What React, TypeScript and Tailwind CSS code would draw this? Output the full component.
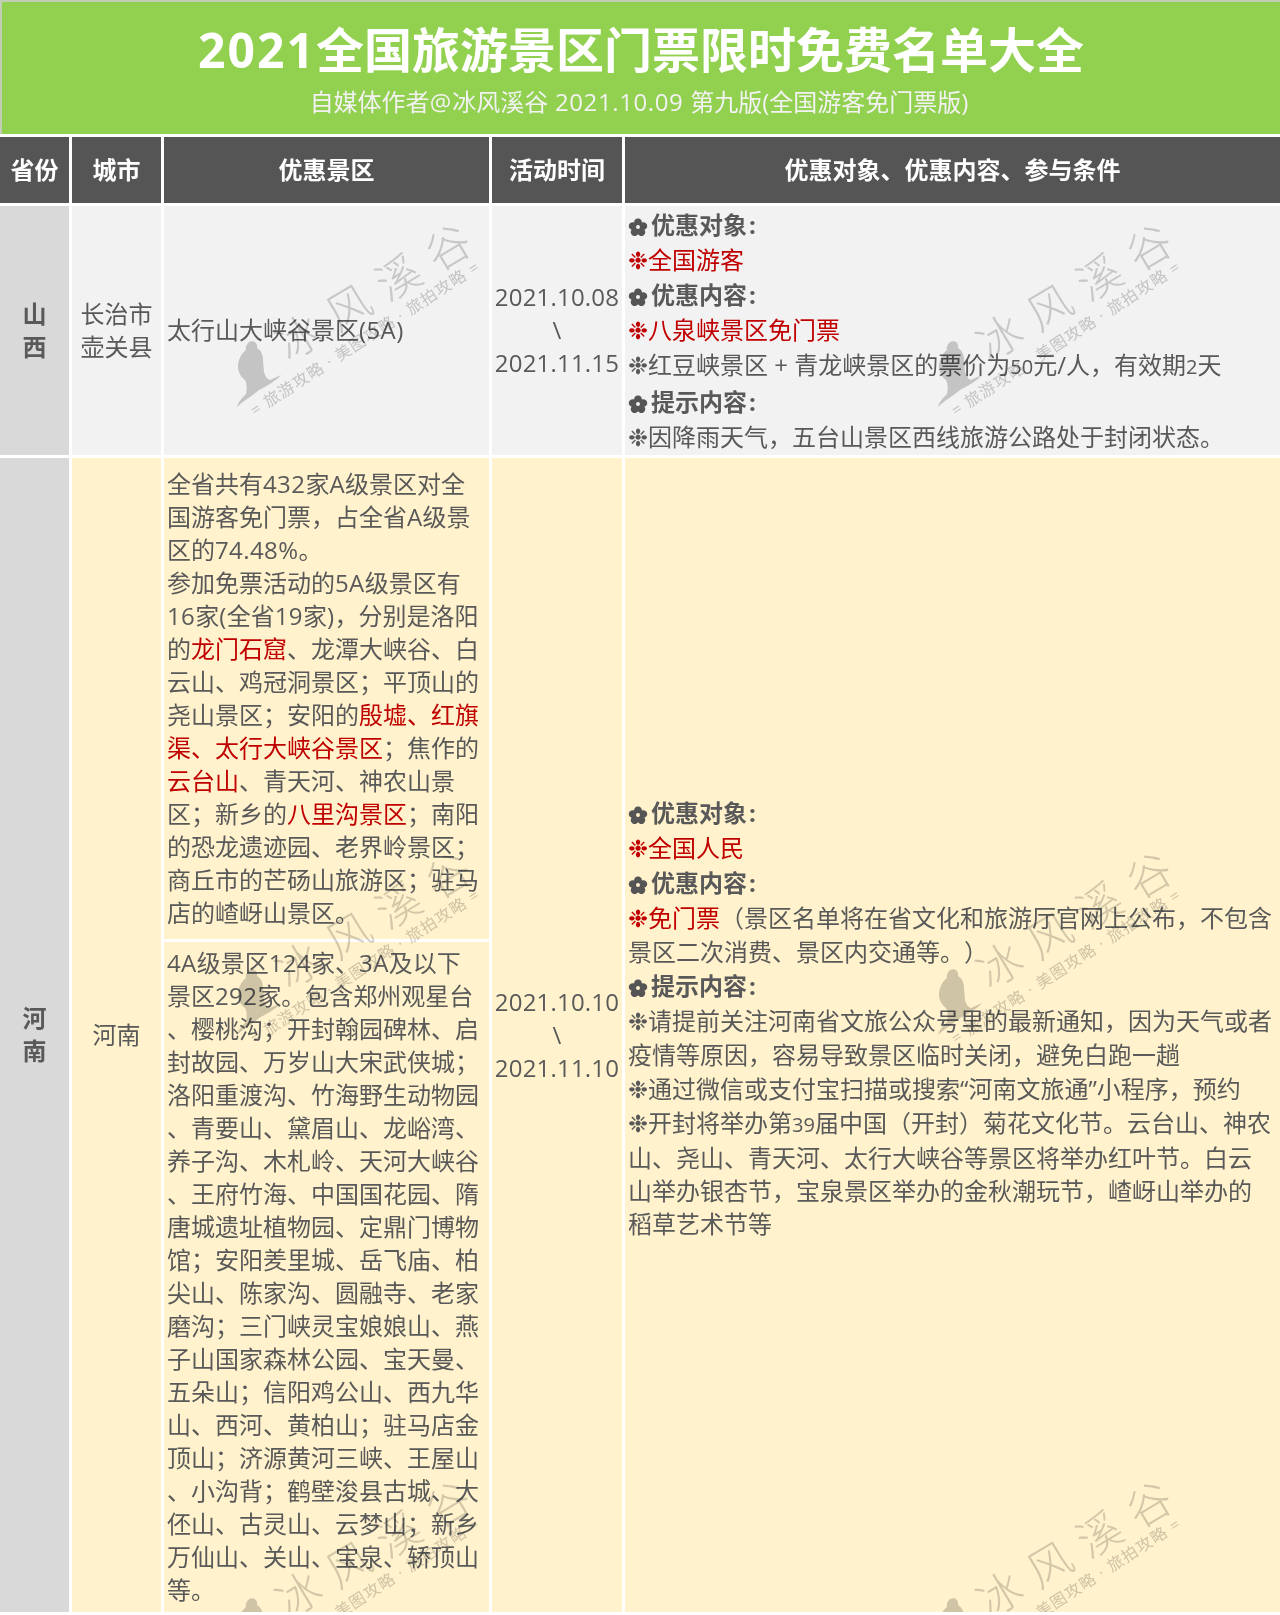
const font = 'font-["Open_Sans","Noto_Sans_CJK_SC","DejaVu_Sans",sans-serif] [text-spacing-trim:space-all]';

const head1 = [
  "全省共有432家A级景区对全",
  "国游客免门票，占全省A级景",
  "区的74.48%。",
  "参加免票活动的5A级景区有",
  "16家(全省19家)，分别是洛阳",
  "的|龙门石窟|、龙潭大峡谷、白",
  "云山、鸡冠洞景区；平顶山的",
  "尧山景区；安阳的|殷墟、红旗",
  "|渠、太行大峡谷景区|；焦作的",
  "|云台山|、青天河、神农山景",
  "区；新乡的|八里沟景区|；南阳",
  "的恐龙遗迹园、老界岭景区；",
  "商丘市的芒砀山旅游区；驻马",
  "店的嵖岈山景区。",
];

const head2 = [
  "4A级景区124家、3A及以下",
  "景区292家。包含郑州观星台",
  "、樱桃沟；开封翰园碑林、启",
  "封故园、万岁山大宋武侠城；",
  "洛阳重渡沟、竹海野生动物园",
  "、青要山、黛眉山、龙峪湾、",
  "养子沟、木札岭、天河大峡谷",
  "、王府竹海、中国国花园、隋",
  "唐城遗址植物园、定鼎门博物",
  "馆；安阳羑里城、岳飞庙、柏",
  "尖山、陈家沟、圆融寺、老家",
  "磨沟；三门峡灵宝娘娘山、燕",
  "子山国家森林公园、宝天曼、",
  "五朵山；信阳鸡公山、西九华",
  "山、西河、黄柏山；驻马店金",
  "顶山；济源黄河三峡、王屋山",
  "、小沟背；鹤壁浚县古城、大",
  "伾山、古灵山、云梦山；新乡",
  "万仙山、关山、宝泉、轿顶山",
  "等。",
];

// latin runs sit a little wider than Open Sans; ~x~ marks the smaller digits
function Latin({ text }: { text: string }) {
  return (
    <>
      {text.split("~").map((chunk, i) =>
        i % 2 === 1 ? (
          <span key={i} className="text-[20px]">
            {chunk}
          </span>
        ) : (
          chunk.split(/([0-9A-Z.%()]+)/).map((run, j) =>
            j % 2 === 1 ? (
              <span key={j} className="tracking-[0.4px]">
                {run}
              </span>
            ) : (
              run
            ),
          )
        ),
      )}
    </>
  );
}

// text between pipes is red
function Marked({ text }: { text: string }) {
  return (
    <>
      {text.split("|").map((part, i) =>
        i % 2 === 1 ? (
          <span key={i} className="text-[#c00000]">
            <Latin text={part} />
          </span>
        ) : (
          <Latin key={i} text={part} />
        ),
      )}
    </>
  );
}

function Lines({ lines }: { lines: string[] }) {
  return (
    <>
      {lines.map((l) => (
        <div key={l} className="whitespace-nowrap leading-[33px]">
          <Marked text={l} />
        </div>
      ))}
    </>
  );
}

function Flower() {
  return (
    <svg className="mr-[3px] inline-block align-[-3px]" width="20" height="20" viewBox="0 0 20 20" fill="#555555">
      <path
        fillRule="evenodd"
        d="M10 1.500c2.600 0 4 1.800 3.900 4 2.100-.8 4.400 0 5.100 2.200.8 2.400-.4 4.200-2.600 4.900 1.300 1.800 1.200 4.200-.7 5.600-2 1.500-4.200.9-5.700-.9-1.500 1.800-3.700 2.400-5.700.9-1.900-1.400-2-3.800-.7-5.600C1.400 11.900.2 10.100 1 7.700 1.700 5.500 4 4.700 6.100 5.500 6 3.300 7.400 1.500 10 1.500zM10 8a2 2 0 1 0 0 4 2 2 0 0 0 0-4z"
      />
    </svg>
  );
}

function Heading({ children }: { children: string }) {
  return (
    <div className="whitespace-nowrap font-bold leading-[35px]">
      <Flower />
      {children}
      <span className="ml-[2px]">:</span>
    </div>
  );
}

function Note({ text, tight = false }: { text: string; tight?: boolean }) {
  return (
    <div className={`whitespace-nowrap ${tight ? "leading-[33px]" : "leading-[35px]"}`}>
      <Marked text={text} />
    </div>
  );
}

function Plain({ text }: { text: string }) {
  return <div className="whitespace-nowrap leading-[33px]">{text}</div>;
}

function Watermark({ className }: { className: string }) {
  return (
    <div className={`pointer-events-none absolute h-[200px] w-[250px] mix-blend-multiply ${className}`}>
      <svg className="absolute left-0 top-[120px]" width="60" height="70" viewBox="0 0 60 70" fill="#cfcfcf">
        <path d="M17 4c5-2 9 1 8 6 4 2 6 7 6 12l1 12c1 4 3 7 6 8l11-5c-5 6-13 10-22 15C20 58 11 63 5 69c1-5 5-9 9-13 1-6 1-10-1-14-4-3-7-8-7-13 0-7 3-13 8-17-1-3 1-6 3-8z" />
      </svg>
      <div className="absolute left-[147px] top-[70px] -translate-x-1/2 -translate-y-1/2 -rotate-[31deg] whitespace-nowrap text-[44px] font-light leading-none tracking-[14px] text-[#d2d2d2]">
        冰风溪谷
      </div>
      <div className="absolute left-[133px] top-[120px] -translate-x-1/2 -translate-y-1/2 -rotate-[33deg] whitespace-nowrap text-[16px] leading-none tracking-[1.2px] text-[#cfcfcf]">
        = 旅游攻略 · 美图攻略 · 旅拍攻略 =
      </div>
    </div>
  );
}

function Cell({ className = "", children }: { className?: string; children?: React.ReactNode }) {
  return <div className={`flex flex-col justify-center ${className}`}>{children}</div>;
}

function HeadCell({ children }: { children: string }) {
  return (
    <div className="flex items-center justify-center bg-[#555555] text-[24px] font-bold text-white">
      {children}
    </div>
  );
}

export default function App() {
  return (
    <div className={`relative h-[1615px] w-[1280px] overflow-hidden bg-white text-[24px] text-[#595959] ${font}`}>
      <div className="h-[134px] border-l-2 border-t-2 border-[#c3ccb4] bg-[#92d050] text-center">
        <div className="pt-[15px] text-[48px] font-bold leading-[66px] text-white">
          <span className="tracking-[2px]">2021</span>全国旅游景区门票限时免费名单大全
        </div>
        <div className="pr-[4px] pt-[2px] text-[24px] leading-[33px] text-[#f2f2f2]">
          自媒体作者<span className="tracking-[1px]">@</span>冰风溪谷<span className="tracking-[0.6px]"> 2021.10.09 </span>第九版(全国游客免门票版)
        </div>
      </div>

      <div className="mt-[3px] grid grid-cols-[69px_89px_325px_130px_655px] grid-rows-[66px_249px_1154px] gap-[3px]">
        <HeadCell>省份</HeadCell>
        <HeadCell>城市</HeadCell>
        <HeadCell>优惠景区</HeadCell>
        <HeadCell>活动时间</HeadCell>
        <HeadCell>优惠对象、优惠内容、参与条件</HeadCell>

        <Cell className="items-center bg-[#d9d9d9] pb-[2px] font-bold leading-[33px]">
          <div>山</div>
          <div>西</div>
        </Cell>
        <Cell className="items-center bg-[#f2f2f2] pb-[2px] leading-[33px]">
          <div>长治市</div>
          <div>壶关县</div>
        </Cell>
        <Cell className="bg-[#f2f2f2] px-[3px] pb-[2px] leading-[33px]">
          <div>
            <Marked text="太行山大峡谷景区(5A)" />
          </div>
        </Cell>
        <Cell className="items-center bg-[#f2f2f2] pb-[2px] leading-[33px] tracking-[0.2px]">
          <div>2021.10.08</div>
          <div>\</div>
          <div>2021.11.15</div>
        </Cell>
        <Cell className="bg-[#f2f2f2] px-[3px] pb-[1px]">
          <Heading>优惠对象</Heading>
          <Note text="|❉全国游客|" />
          <Heading>优惠内容</Heading>
          <Note text="|❉八泉峡景区免门票|" />
          <Note text="❉红豆峡景区 + 青龙峡景区的票价为~50~元/人，有效期~2~天" />
          <Heading>提示内容</Heading>
          <Note text="❉因降雨天气，五台山景区西线旅游公路处于封闭状态。" />
        </Cell>

        <Cell className="items-center bg-[#d9d9d9] pb-[2px] font-bold leading-[33px]">
          <div>河</div>
          <div>南</div>
        </Cell>
        <Cell className="items-center bg-[#fff2cc] pb-[2px] leading-[33px]">河南</Cell>
        <div className="flex flex-col gap-[3px]">
          <Cell className="h-[481px] bg-[#fff2cc] px-[3px] pb-[2px]">
            <Lines lines={head1} />
          </Cell>
          <Cell className="flex-1 bg-[#fff2cc] px-[3px] pb-[2px]">
            <Lines lines={head2} />
          </Cell>
        </div>
        <Cell className="items-center bg-[#fff2cc] pb-[2px] leading-[33px] tracking-[0.2px]">
          <div>2021.10.10</div>
          <div>\</div>
          <div>2021.11.10</div>
        </Cell>
        <Cell className="bg-[#fff2cc] px-[3px] pb-[2px]">
          <Heading>优惠对象</Heading>
          <Note text="|❉全国人民|" />
          <Heading>优惠内容</Heading>
          <Note text="|❉免门票|（景区名单将在省文化和旅游厅官网上公布，不包含" />
          <Plain text="景区二次消费、景区内交通等。）" />
          <Heading>提示内容</Heading>
          <Note text="❉请提前关注河南省文旅公众号里的最新通知，因为天气或者" />
          <Plain text="疫情等原因，容易导致景区临时关闭，避免白跑一趟" />
          <Note text="❉通过微信或支付宝扫描或搜索“河南文旅通”小程序，预约" />
          <Note tight text="❉开封将举办第~39~届中国（开封）菊花文化节。云台山、神农" />
          <Plain text="山、尧山、青天河、太行大峡谷等景区将举办红叶节。白云" />
          <Plain text="山举办银杏节，宝泉景区举办的金秋潮玩节，嵖岈山举办的" />
          <Plain text="稻草艺术节等" />
          <div className="h-[33px]" />
        </Cell>
      </div>

      <Watermark className="left-[232px] top-[218px]" />
      <Watermark className="left-[933px] top-[218px]" />
      <Watermark className="left-[232px] top-[846px]" />
      <Watermark className="left-[933px] top-[846px]" />
      <Watermark className="left-[232px] top-[1475px]" />
      <Watermark className="left-[933px] top-[1475px]" />
      <div className="absolute bottom-0 left-0 h-[3px] w-full bg-white" />
    </div>
  );
}
